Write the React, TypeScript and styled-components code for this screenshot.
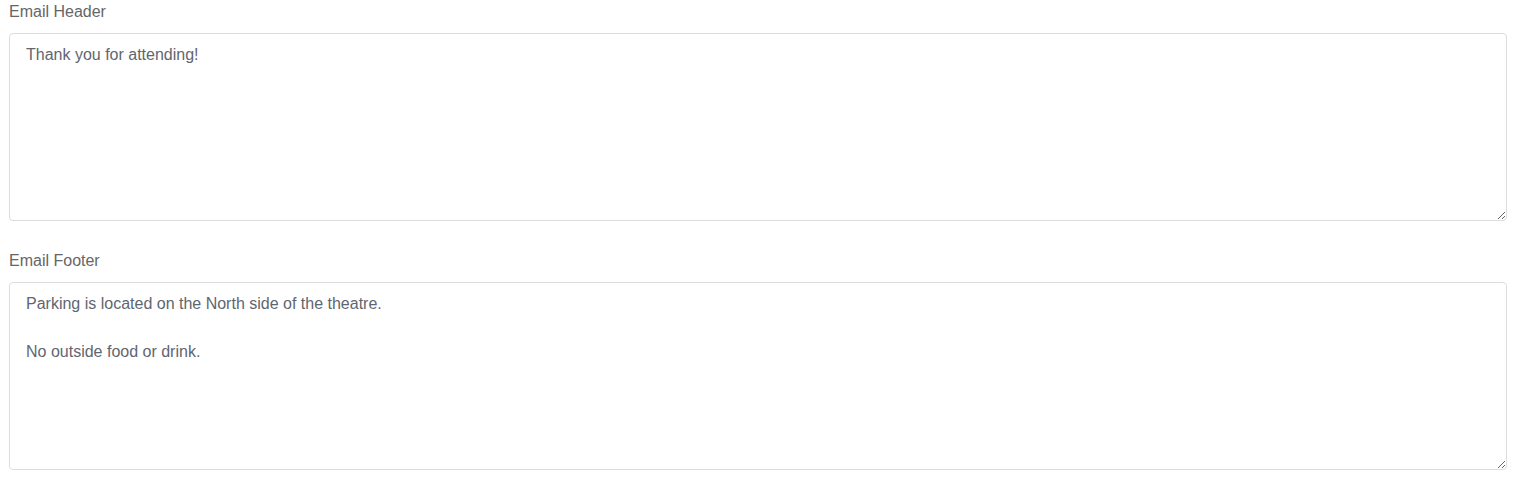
import React from "react";
import styled, { createGlobalStyle } from "styled-components";

const Global = createGlobalStyle`
  html, body { margin: 0; padding: 0; background: #fff; }
  body { font-family: "Liberation Sans", Arial, sans-serif; }
`;

const Page = styled.div`
  display: flex;
  flex-direction: column;
  gap: 28px;
  padding: 0 14px 0 9px;
`;

const Field = styled.div`
  display: flex;
  flex-direction: column;
  gap: 9px;
`;

const Label = styled.label`
  font-size: 16px;
  line-height: 24px;
  color: #666;
`;

const Area = styled.textarea`
  box-sizing: border-box;
  width: 100%;
  height: 188px;
  margin: 0;
  padding: 9px 16px 7px;
  border: 1px solid #ddd;
  border-radius: 4px;
  font-family: "Liberation Sans", Arial, sans-serif;
  font-size: 16px;
  line-height: 24px;
  color: #5f6670;
  resize: vertical;
  outline: none;
  background: #fff;
`;

export default function App() {
  return (
    <>
      <Global />
      <Page>
        <Field>
          <Label>Email Header</Label>
          <Area readOnly defaultValue="Thank you for attending!" />
        </Field>
        <Field>
          <Label>Email Footer</Label>
          <Area
            readOnly
            defaultValue={"Parking is located on the North side of the theatre.\n\nNo outside food or drink."}
          />
        </Field>
      </Page>
    </>
  );
}
